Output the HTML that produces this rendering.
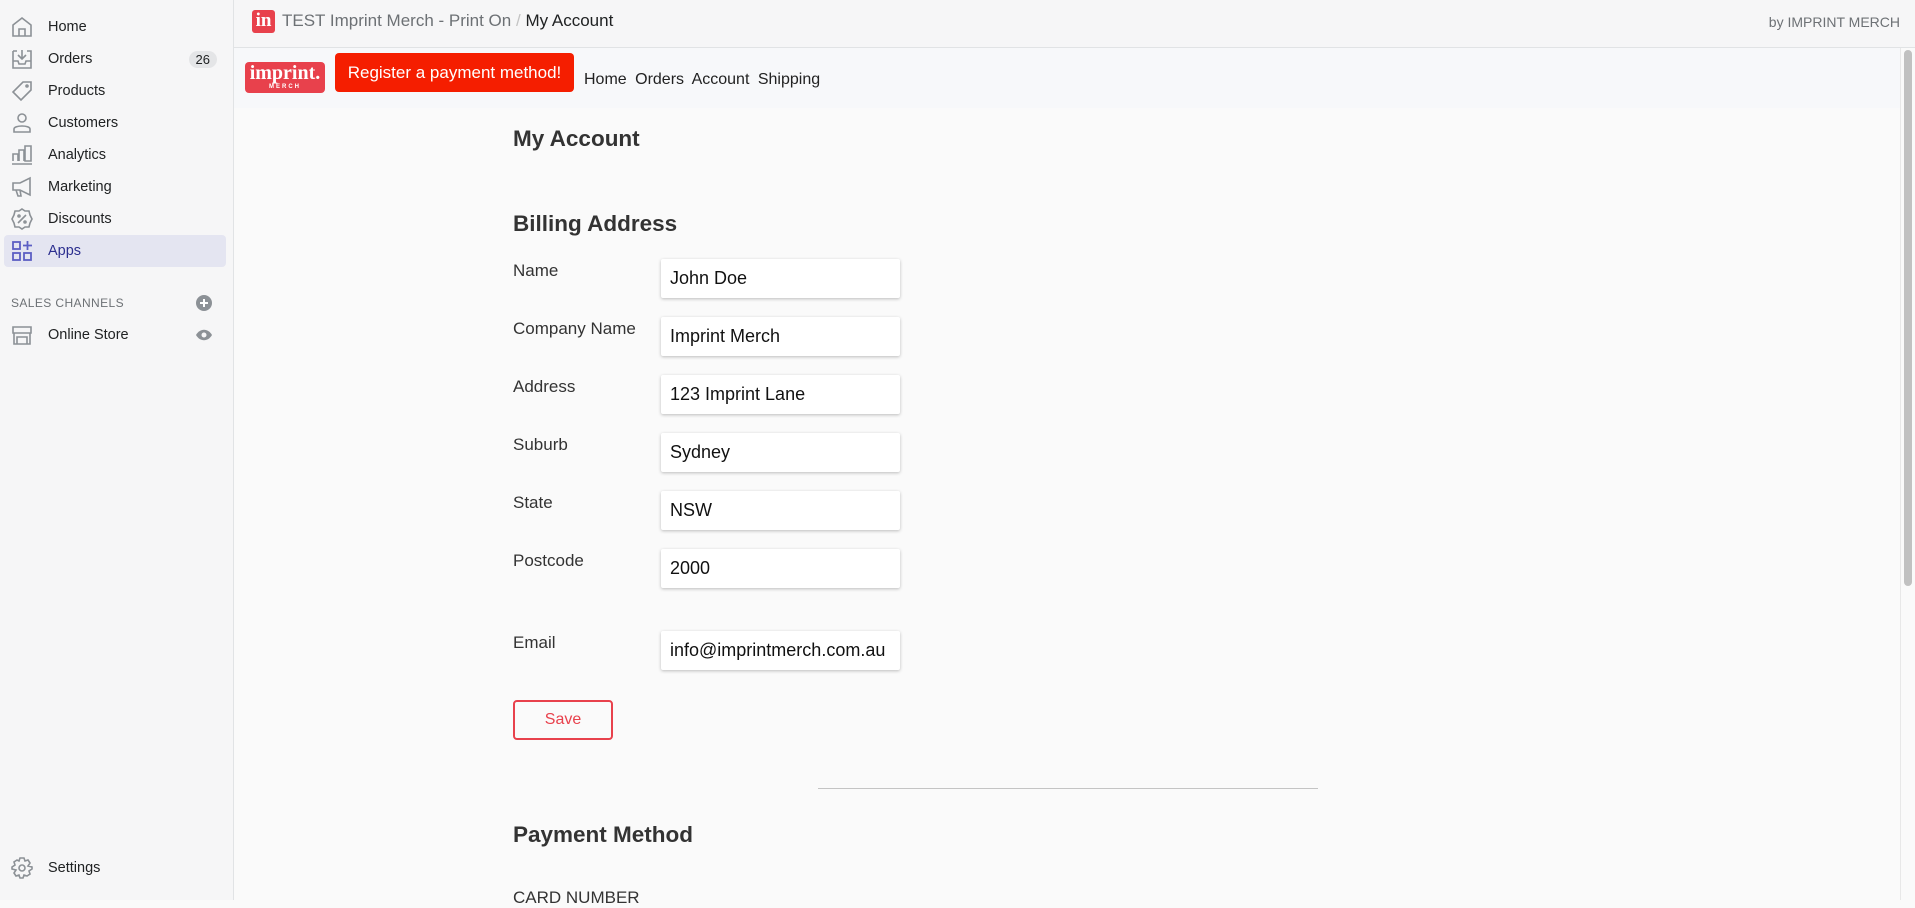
<!DOCTYPE html>
<html><head><meta charset="utf-8"><style>
*{box-sizing:border-box;margin:0;padding:0}
body{width:1915px;height:900px;overflow:hidden;background:#fafafa;font-family:"Liberation Sans",sans-serif;position:relative;color:#202223}
#side{position:absolute;left:0;top:0;width:234px;height:900px;background:#f6f6f7;border-right:1px solid #e1e3e5}
.nav{position:absolute;left:4px;width:222px;height:32px;font-size:14.5px;color:#202223;line-height:32px;padding-left:44px;border-radius:4px}
.nav svg{position:absolute;left:7px;top:5px}
.nav.sel{background:#e4e5f1;color:#2c2f8f}
.badge{position:absolute;right:9px;top:8px;background:#e4e5e7;border-radius:10px;font-size:13px;line-height:17px;padding:0 7px;color:#202223}
#top{position:absolute;left:234px;top:0;right:0;height:48px;border-bottom:1px solid #e1e3e5;background:#f6f6f7}
#bar{position:absolute;left:234px;top:48px;width:1666px;height:60px;background:#f7f8fa}
.lbl{position:absolute;left:513px;font-size:17px;color:#333}
.inp{position:absolute;left:661px;width:239px;height:39px;background:#fff;box-shadow:0 1px 3px rgba(0,0,0,.25);border-radius:2px;font-size:18px;line-height:39px;padding-left:9px;color:#111}
h2{position:absolute;left:513px;font-size:22.5px;font-weight:bold;color:#333;font-family:"Liberation Sans",sans-serif}
</style></head><body>
<div id="side">
 <div class="nav" style="top:11px"><svg width="22" height="22" viewBox="0 0 22 22" fill="none" stroke="#8c9196" stroke-width="1.6"><path d="M2 9 L11 2 L20 9 V20 H2Z M8 20 V13 H14 V20"/></svg>Home</div>
 <div class="nav" style="top:43px"><svg width="22" height="22" viewBox="0 0 22 22" fill="none" stroke="#8c9196" stroke-width="1.6"><path d="M2 3 H6 M16 3 H20 V20 H2 V3 M2 13 H7 L8 16 H14 L15 13 H20 M11 2 V11 M7 7 L11 11 L15 7"/></svg>Orders<span class="badge">26</span></div>
 <div class="nav" style="top:75px"><svg width="22" height="22" viewBox="0 0 22 22" fill="none" stroke="#8c9196" stroke-width="1.6"><path d="M12 2 H20 V10 L10 20 L2 12 Z"/><circle cx="16" cy="6" r="1"/></svg>Products</div>
 <div class="nav" style="top:107px"><svg width="22" height="22" viewBox="0 0 22 22" fill="none" stroke="#8c9196" stroke-width="1.6"><circle cx="11" cy="6" r="4"/><path d="M3 20 V17 C3 13 19 13 19 17 V20Z"/></svg>Customers</div>
 <div class="nav" style="top:139px"><svg width="22" height="22" viewBox="0 0 22 22" fill="none" stroke="#8c9196" stroke-width="1.6"><path d="M1 20 H21 M2 17 V10 H7 V17 M8 17 V6 H13 V17 M14 17 V2 H20 V17 Z"/></svg>Analytics</div>
 <div class="nav" style="top:171px"><svg width="22" height="22" viewBox="0 0 22 22" fill="none" stroke="#8c9196" stroke-width="1.6"><path d="M2 7 H9 L19 2 V19 L9 14 H2 Z M5 14 L7 20 H10 L9 14"/></svg>Marketing</div>
 <div class="nav" style="top:203px"><svg width="22" height="22" viewBox="0 0 22 22" fill="none" stroke="#8c9196" stroke-width="1.6"><path d="M11 1 L14 3 L18 3 L19 7 L21 11 L19 15 L18 19 L14 19 L11 21 L8 19 L4 19 L3 15 L1 11 L3 7 L4 3 L8 3Z M7 15 L15 7"/><circle cx="8" cy="8" r="1"/><circle cx="14" cy="14" r="1"/></svg>Discounts</div>
 <div class="nav sel" style="top:235px"><svg width="22" height="22" viewBox="0 0 22 22" fill="none" stroke="#5c5fc4" stroke-width="1.8"><rect x="2" y="2" width="7" height="7"/><rect x="2" y="13" width="7" height="7"/><rect x="13" y="13" width="7" height="7"/><path d="M16.5 1 V10 M12 5.5 H21"/></svg>Apps</div>
 <div style="position:absolute;left:11px;top:296px;font-size:12px;color:#6d7175;letter-spacing:.4px">SALES CHANNELS</div>
 <svg style="position:absolute;left:196px;top:295px" width="16" height="16" viewBox="0 0 16 16"><circle cx="8" cy="8" r="8" fill="#8c9196"/><path d="M8 4V12M4 8H12" stroke="#fff" stroke-width="2"/></svg>
 <div class="nav" style="top:319px"><svg width="22" height="22" viewBox="0 0 22 22" fill="none" stroke="#8c9196" stroke-width="1.6"><path d="M2 3 H20 V9 H2Z M3 9 V20 H19 V9 M6 20 V13 H16 V20"/></svg>Online Store</div>
 <svg style="position:absolute;left:195px;top:329px" width="18" height="12" viewBox="0 0 18 12"><path d="M1 6 C5 -1 13 -1 17 6 C13 13 5 13 1 6Z" fill="#8c9196"/><circle cx="9" cy="6" r="2.5" fill="#f6f6f7"/></svg>
 <div class="nav" style="top:852px"><svg width="22" height="22" viewBox="0 0 22 22" fill="none" stroke="#8c9196" stroke-width="1.6"><circle cx="11" cy="11" r="3"/><path d="M9 1 H13 L14 4 L17 3 L19 6 L17 9 L21 10 V12 L18 14 L19 17 L16 19 L13 18 L12 21 H9 L8 18 L5 19 L3 16 L5 13 L1 12 V10 L4 8 L3 5 L6 3 L8 4Z"/></svg>Settings</div>
</div>
<div id="top">
 <div style="position:absolute;left:18px;top:10px;width:23px;height:23px;background:#e8414c;border-radius:3px;color:#fff;font-family:'Liberation Serif',serif;font-weight:bold;font-size:19px;line-height:21px;text-align:center">in</div>
 <div style="position:absolute;left:48px;top:11px;font-size:17px;color:#6d7175">TEST Imprint Merch - Print On <span style="color:#c4c4c4">/</span> <span style="color:#202223">My Account</span></div>
 <div style="position:absolute;right:15px;top:14px;font-size:14px;color:#6d7175">by IMPRINT MERCH</div>
</div>
<div style="position:absolute;left:1900px;top:48px;width:15px;height:852px;background:#fafafa;border-left:1px solid #e8e8e8"></div>
<div style="position:absolute;left:1904px;top:50px;width:8px;height:536px;background:#c1c1c1;border-radius:4px"></div>
<div id="bar"></div>
<div style="position:absolute;left:245px;top:62px;width:80px;height:31px;background:#e8414c;border-radius:4px;color:#fff;text-align:center;font-family:'Liberation Serif',serif;font-weight:bold;font-size:20px;line-height:22px">imprint.<div style="font-size:6px;line-height:6px;font-family:'Liberation Sans';letter-spacing:2px">MERCH</div></div>
<div style="position:absolute;left:335px;top:53px;width:239px;height:39px;background:#f51e00;border-radius:4px;color:#fff;font-size:17px;line-height:39px;text-align:center">Register a payment method!</div>
<div style="position:absolute;left:584px;top:71px;font-size:16px;color:#222;word-spacing:4px">Home Orders Account Shipping</div>
<h2 style="top:126px">My Account</h2>
<h2 style="top:211px">Billing Address</h2>
<div class="lbl" style="top:261px">Name</div><div class="inp" style="top:259px">John Doe</div>
<div class="lbl" style="top:319px">Company Name</div><div class="inp" style="top:317px">Imprint Merch</div>
<div class="lbl" style="top:377px">Address</div><div class="inp" style="top:375px">123 Imprint Lane</div>
<div class="lbl" style="top:435px">Suburb</div><div class="inp" style="top:433px">Sydney</div>
<div class="lbl" style="top:493px">State</div><div class="inp" style="top:491px">NSW</div>
<div class="lbl" style="top:551px">Postcode</div><div class="inp" style="top:549px">2000</div>
<div class="lbl" style="top:633px">Email</div><div class="inp" style="top:631px">info@imprintmerch.com.au</div>
<div style="position:absolute;left:513px;top:700px;width:100px;height:40px;border:2px solid #e8414c;border-radius:4px;color:#e8414c;font-size:16px;line-height:36px;text-align:center">Save</div>
<div style="position:absolute;left:818px;top:788px;width:500px;height:1px;background:#c4c4c4"></div>
<h2 style="top:822px">Payment Method</h2>
<div class="lbl" style="top:888px">CARD NUMBER</div>
</body></html>
